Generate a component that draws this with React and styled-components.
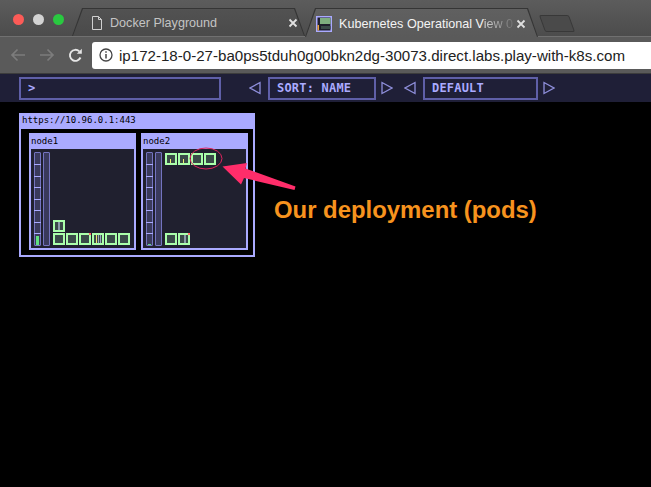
import React from 'react';
import styled, { createGlobalStyle } from 'styled-components';

const GlobalStyle = createGlobalStyle`
  html, body {
    margin: 0;
    padding: 0;
    width: 651px;
    height: 487px;
    overflow: hidden;
    background: #000;
  }
`;

const Page = styled.div`
  position: relative;
  width: 651px;
  height: 487px;
  background: #000;
  overflow: hidden;
`;

/* Browser chrome */
const TabStrip = styled.div`
  height: 36px;
  display: flex;
  align-items: flex-end;
  padding-left: 13px;
  background: linear-gradient(#5c5c5c, #4c4c4c);
  border-bottom: 1px solid #707070;
`;

const Lights = styled.div`
  display: flex;
  gap: 9px;
  align-self: flex-start;
  padding-top: 14px;
  width: 59px;
`;

const Light = styled.span`
  width: 11px;
  height: 11px;
  border-radius: 50%;
  background: ${({ $color }) => $color};
`;

const Tab = styled.div`
  position: relative;
  isolation: isolate;
  width: 233px;
  height: ${({ $active }) => ($active ? 29 : 28)}px;
  margin-bottom: ${({ $active }) => ($active ? -1 : 0)}px;
  display: flex;
  align-items: center;
  gap: 7px;
  padding: ${({ $active }) => ($active ? '2px 12px 0 11px' : '2px 7px 0 19px')};
  box-sizing: border-box;
  flex: none;
  font: 12.6px 'Liberation Sans', Arial, sans-serif;
  color: ${({ $active }) => ($active ? '#f4f4f4' : '#c4c4c4')};
  background: #353535;
  clip-path: polygon(10px 0, calc(100% - 10px) 0, 100% 100%, 0 100%);

  &::before {
    content: '';
    position: absolute;
    inset: 1px 1px 0;
    z-index: -1;
    background: ${({ $active }) => ($active ? 'linear-gradient(#606060, #5a5a5a)' : 'linear-gradient(#525252, #4a4a4a)')};
    clip-path: polygon(10px 0, calc(100% - 10px) 0, 100% 100%, 0 100%);
  }
`;

const TabTitle = styled.span`
  flex: 1;
  min-width: 0;
  white-space: nowrap;
`;

const FadingPart = styled.span`
  background: linear-gradient(90deg, #d8d8d8, #707070);
  -webkit-background-clip: text;
  background-clip: text;
  color: transparent;
`;

const NewTab = styled.div`
  width: 28px;
  height: 15px;
  margin: 0 0 4px 4px;
  flex: none;
  background: #4a4a4a;
  border: 1px solid #383838;
  border-radius: 2px;
  transform: skewX(20deg);
`;

const Toolbar = styled.div`
  height: 36px;
  display: flex;
  align-items: center;
  padding-left: 10px;
  background: #5a5a5a;
  border-bottom: 1px solid #3c3c3c;
`;

const NavIcons = styled.div`
  display: flex;
  align-items: center;
  gap: 13px;
  width: 82px;
  flex: none;
`;

const AddressBar = styled.div`
  flex: 1;
  height: 27px;
  display: flex;
  align-items: center;
  gap: 6px;
  padding-left: 7px;
  background: #fff;
  border-radius: 3px 0 0 3px;
  font: 15.1px 'Liberation Sans', Arial, sans-serif;
  color: #222;
  white-space: nowrap;
`;

/* Kube ops view */
const KubeBar = styled.div`
  height: 28px;
  display: flex;
  align-items: center;
  padding-left: 19px;
  box-sizing: border-box;
  background: #1f1f37;
  font: bold 12px 'DejaVu Sans Mono', monospace;
  color: #aaaaff;
`;

const Field = styled.div`
  width: ${({ $w }) => $w}px;
  height: 23px;
  margin-right: ${({ $mr }) => $mr || 0}px;
  display: flex;
  align-items: center;
  padding-left: 7px;
  box-sizing: border-box;
  border: 2px solid #5f5fa8;
  flex: none;
  letter-spacing: 0.2px;
`;

const Arrow = styled.svg`
  width: 12px;
  height: 14px;
  flex: none;
  margin: ${({ $m }) => $m};
`;

const Canvas = styled.main`
  padding: 11px 0 0 19px;
`;

const Cluster = styled.section`
  width: 236px;
  height: 144px;
  box-sizing: border-box;
  background: #000;
  border: 2px solid #aaaaff;
  border-top: 0;
  display: flex;
  flex-direction: column;
`;

const ClusterTitle = styled.div`
  height: 16px;
  flex: none;
  margin: 0 -2px;
  padding-left: 3px;
  background: #aaaaff;
  font: 9px/15px 'DejaVu Sans Mono', monospace;
  color: #000;
`;

const NodeRow = styled.div`
  display: flex;
  gap: 5px;
  padding: 4px 0 0 8px;
`;

const Node = styled.article`
  width: 107px;
  height: 117px;
  box-sizing: border-box;
  border: 2px solid #aaaaff;
  border-top: 0;
  background: #20202f;
  display: flex;
  flex-direction: column;
`;

const NodeName = styled.div`
  height: 16px;
  flex: none;
  margin: 0 -2px;
  padding-left: 2px;
  background: #aaaaff;
  font: 9px/16px 'DejaVu Sans Mono', monospace;
  color: #000;
`;

const NodeBody = styled.div`
  flex: 1;
  display: flex;
  padding: 3px;
`;

const Bar = styled.div`
  position: relative;
  width: 7px;
  height: 94px;
  margin-right: 2px;
  box-sizing: border-box;
  border: 1px solid #7474c0;
  border-radius: 1px;
  background: #3a3a5c;
  flex: none;
`;

const BarFill = styled.div`
  position: absolute;
  left: 1px;
  bottom: 0;
  width: 3px;
  background: ${({ $color }) => $color};
`;

const Tick = styled.div`
  position: absolute;
  left: -1px;
  right: -1px;
  height: 1px;
  background: #aaaaff;
`;

const PodArea = styled.div`
  flex: 1;
  display: flex;
  flex-direction: column;
  justify-content: ${({ $spread }) => ($spread ? 'space-between' : 'flex-end')};
  gap: 1px;
  padding: ${({ $spread }) => ($spread ? '1px' : '0')} 0 1px 1px;
`;

const PodRow = styled.div`
  display: flex;
  gap: 1px;
`;

const Pod = styled.div`
  position: relative;
  width: 12px;
  height: 12px;
  box-sizing: border-box;
  border: 2px solid #aaffaa;
  background: #3a4a48;
  flex: none;
`;

const PodMeter = styled.div`
  position: absolute;
  bottom: 0;
  left: ${({ $x }) => $x}px;
  width: 1px;
  height: ${({ $h }) => $h}px;
  background: ${({ $color }) => $color};
`;

const PodDot = styled.div`
  position: absolute;
  top: -2px;
  right: -2px;
  width: 2px;
  height: 2px;
  background: #ff6a6a;
`;

/* Annotation drawn over the page */
const Callout = styled.svg`
  position: absolute;
  left: 0;
  top: 0;
  width: 651px;
  height: 487px;
  pointer-events: none;
`;

const CalloutText = styled.div`
  position: absolute;
  left: 274px;
  top: 196px;
  font: bold 23.9px 'Liberation Sans', Arial, sans-serif;
  color: #f7931e;
  white-space: nowrap;
`;

const FileIcon = () => (
  <svg width="12" height="14" viewBox="0 0 12 14" fill="none" stroke="#d0d0d0" strokeWidth="1">
    <path d="M1.5 .5h6l3 3v10h-9z M7.5 .5v3h3" />
  </svg>
);

const KubeFavicon = () => (
  <svg width="16" height="16" viewBox="0 0 16 16" style={{ flex: 'none' }}>
    <rect width="16" height="16" fill="#aaaaff" />
    <rect x="1.500" y="1.500" width="13" height="13" fill="#1f1f2c" />
    <rect x="1.500" y="9" width="1.500" height="5.500" fill="#e8a040" />
    <rect x="4" y="2" width="10.500" height="6" fill="#7fae7f" />
    <rect x="5" y="10" width="9.500" height="3" fill="#3a4a48" />
  </svg>
);

const CloseIcon = ({ color }) => (
  <svg width="10" height="10" viewBox="0 0 10 10" stroke={color} strokeWidth="1.8" style={{ flex: 'none' }}>
    <path d="M1.5 1.5l7 7M8.5 1.5l-7 7" />
  </svg>
);

const TICKS = [11, 23, 34, 46, 57, 69, 80];

const MeterBar = ({ ticks, fill, color }) => (
  <Bar>
    {ticks && TICKS.map((t) => <Tick key={t} style={{ top: t }} />)}
    {fill ? <BarFill $color={color} style={{ height: fill }} /> : null}
  </Bar>
);

const PodBox = ({ meters = [], dot }) => (
  <Pod>
    {meters.map((m, i) => (
      <PodMeter key={i} $x={m[0]} $h={m[1]} $color={m[2]} />
    ))}
    {dot && <PodDot />}
  </Pod>
);

const TriLeft = ({ m }) => (
  <Arrow $m={m} viewBox="0 0 12 14" fill="none" stroke="#8f8fdc" strokeWidth="1.3">
    <path d="M11 1.5v11L1 7z" />
  </Arrow>
);

const TriRight = ({ m }) => (
  <Arrow $m={m} viewBox="0 0 12 14" fill="none" stroke="#8f8fdc" strokeWidth="1.3">
    <path d="M1 1.5v11L11 7z" />
  </Arrow>
);

export default function App() {
  return (
    <Page>
      <GlobalStyle />
      <TabStrip>
        <Lights>
          <Light $color="#fc5b57" />
          <Light $color="#d3d3d3" />
          <Light $color="#29c940" />
        </Lights>
        <Tab>
          <FileIcon />
          <TabTitle>Docker Playground</TabTitle>
          <CloseIcon color="#e0e0e0" />
        </Tab>
        <Tab $active>
          <KubeFavicon />
          <TabTitle>Kubernetes Operational V<FadingPart>iew 0</FadingPart></TabTitle>
          <CloseIcon color="#e0e0e0" />
        </Tab>
        <NewTab />
      </TabStrip>
      <Toolbar>
        <NavIcons>
          <svg width="16" height="14" viewBox="0 0 16 14" fill="none" stroke="#7c7c7c" strokeWidth="1.7">
            <path d="M15 7H2M7.5 1.5L2 7l5.500 5.500" />
          </svg>
          <svg width="16" height="14" viewBox="0 0 16 14" fill="none" stroke="#7c7c7c" strokeWidth="1.7">
            <path d="M1 7h13M8.500 1.500L14 7l-5.500 5.500" />
          </svg>
          <svg width="15" height="15" viewBox="0 0 15 15" fill="none" stroke="#e6e6e6" strokeWidth="1.9">
            <path d="M12.500 9.500A5.500 5.500 0 1 1 11.300 3.400" />
            <path d="M13.800 .8v5h-5z" fill="#e6e6e6" stroke="none" />
          </svg>
        </NavIcons>
        <AddressBar>
          <svg width="14" height="14" viewBox="0 0 14 14" fill="none" stroke="#444" style={{ flex: 'none' }}>
            <circle cx="7" cy="7" r="6" strokeWidth="1.300" />
            <path d="M7 6v4.500" strokeWidth="1.500" />
            <path d="M7 3.200v1.600" strokeWidth="1.500" />
          </svg>
          <span>ip172-18-0-27-ba0ps5tduh0g00bkn2dg-30073.direct.labs.play-with-k8s.com</span>
        </AddressBar>
      </Toolbar>
      <KubeBar>
        <Field $w={202} $mr={28}>&gt;</Field>
        <TriLeft m="0 7px 0 0" />
        <Field $w={108}>SORT: NAME</Field>
        <TriRight m="0 11px 0 5px" />
        <TriLeft m="0 7px 0 0" />
        <Field $w={115}>DEFAULT</Field>
        <TriRight m="0 0 0 5px" />
      </KubeBar>
      <Canvas>
        <Cluster>
          <ClusterTitle>https://10.96.0.1:443</ClusterTitle>
          <NodeRow>
            <Node>
              <NodeName>node1</NodeName>
              <NodeBody>
                <MeterBar ticks fill={9} color="#5fe07f" />
                <MeterBar />
                <PodArea>
                  <PodRow>
                    <PodBox meters={[[3, 8, '#8a9aa8'], [4, 8, '#8a9aa8']]} />
                  </PodRow>
                  <PodRow>
                    <PodBox />
                    <PodBox />
                    <PodBox dot />
                    <PodBox meters={[[2, 8, '#f0e070'], [4, 8, '#9aa8c0'], [6, 8, '#9aa8c0']]} />
                    <PodBox />
                    <PodBox />
                  </PodRow>
                </PodArea>
              </NodeBody>
            </Node>
            <Node>
              <NodeName>node2</NodeName>
              <NodeBody>
                <MeterBar ticks fill={1} color="#5fe07f" />
                <MeterBar />
                <PodArea $spread>
                  <PodRow>
                    <PodBox meters={[[3, 4, '#f0f070']]} />
                    <PodBox meters={[[3, 4, '#f0f070']]} />
                    <PodBox />
                    <PodBox />
                  </PodRow>
                  <PodRow>
                    <PodBox />
                    <PodBox dot meters={[[4, 8, '#8a9aa8'], [5, 8, '#8a9aa8']]} />
                  </PodRow>
                </PodArea>
              </NodeBody>
            </Node>
          </NodeRow>
        </Cluster>
      </Canvas>
      <Callout viewBox="0 0 651 487">
        <ellipse cx="206" cy="158.500" rx="16" ry="10.500" fill="none" stroke="#e0245e" strokeWidth="1" />
        <path d="M222.500 166.500L247 163l-1.500 5.500L295.500 186.500l-1 3.500L244 178l-3 6.500z" fill="#ff2d6a" />
      </Callout>
      <CalloutText>Our deployment (pods)</CalloutText>
    </Page>
  );
}
